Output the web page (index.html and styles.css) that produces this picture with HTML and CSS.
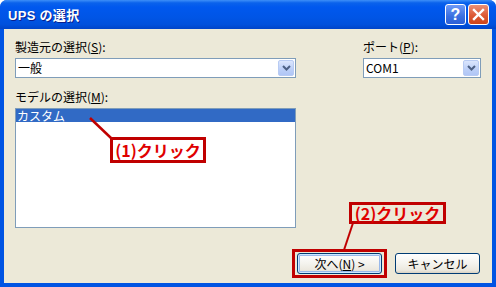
FILE: index.html
```html
<!DOCTYPE html>
<html lang="ja">
<head>
  <meta charset="UTF-8">
  <title>UPS の選択</title>
  <link rel="stylesheet" href="styles.css">
</head>
<body>
  <div class="window">
    <div class="titlebar">
      <span class="title">UPS の選択</span>
      <div class="caption-buttons">
        <div class="cap-btn help">?</div>
        <div class="cap-btn close">
          <svg viewBox="0 0 21 21" width="21" height="21">
            <path d="M6 6 L15 15 M15 6 L6 15" stroke="#fff" stroke-width="2.4" stroke-linecap="square"/>
          </svg>
        </div>
      </div>
    </div>

    <div class="client">
      <div class="top-row">
        <div class="field">
          <label class="label">製造元の選択(<u>S</u>):</label>
          <div class="combo">
            <span class="combo-text">一般</span>
            <span class="drop"><svg viewBox="0 0 9 6" width="9" height="6"><path d="M1 1 L4.5 4.5 L8 1" fill="none" stroke="#4d6185" stroke-width="2"/></svg></span>
          </div>
        </div>
        <div></div>
        <div class="field">
          <label class="label">ポート(<u>P</u>):</label>
          <div class="combo">
            <span class="combo-text">COM1</span>
            <span class="drop"><svg viewBox="0 0 9 6" width="9" height="6"><path d="M1 1 L4.5 4.5 L8 1" fill="none" stroke="#4d6185" stroke-width="2"/></svg></span>
          </div>
        </div>
      </div>

      <div class="field model">
        <label class="label">モデルの選択(<u>M</u>):</label>
        <div class="listbox">
          <div class="list-item selected">カスタム</div>
        </div>
      </div>

      <div class="buttons">
        <button class="btn default">次へ(<u>N</u>) &gt;</button>
        <button class="btn">キャンセル</button>
      </div>

      <!-- annotations drawn over the dialog -->
      <svg class="leaders" width="488" height="254">
        <line x1="86" y1="89" x2="107" y2="109" stroke="#c00000" stroke-width="2.5"/>
        <line x1="349" y1="194" x2="340" y2="221" stroke="#c00000" stroke-width="2"/>
      </svg>
      <div class="callout callout-1">(1)クリック</div>
      <div class="callout callout-2">(2)クリック</div>
      <div class="highlight"></div>
    </div>
  </div>
</body>
</html>
```

FILE: styles.css
```css
body {
  margin: 0;
  background: #fff;
  font-family: "Noto Sans CJK JP", "Liberation Sans", sans-serif;
  font-size: 12px;
  color: #000;
}
.window {
  width: 496px;
  height: 287px;
  display: flex;
  flex-direction: column;
  background: #0054e3;
  border-radius: 7px 7px 0 0;
  overflow: hidden;
}
.titlebar {
  height: 29px;
  flex: none;
  display: flex;
  align-items: center;
  justify-content: space-between;
  padding: 0 7px 0 8px;
  background: linear-gradient(to bottom, #3d8ff8 0%, #0a62ec 10%, #0058ee 25%, #0055e6 60%, #0050dc 85%, #0044c8 100%);
}
.title {
  color: #fff;
  font-family: "Liberation Sans", "Noto Sans CJK JP", sans-serif;
  font-weight: 700;
  font-size: 13px;
  text-shadow: 1px 1px 0 #0a1e8c;
  letter-spacing: 0.3px;
}
.caption-buttons {
  display: flex;
  gap: 2px;
}
.cap-btn {
  width: 21px;
  height: 21px;
  box-sizing: border-box;
  border: 1px solid #fff;
  border-radius: 3px;
  display: flex;
  align-items: center;
  justify-content: center;
  color: #fff;
  font-family: "Liberation Sans", sans-serif;
  font-weight: 700;
  font-size: 16px;
}
.cap-btn svg {
  margin: -1px;
}
.help {
  background: linear-gradient(to bottom, #6e9af7, #3a6fe0 60%, #2c5fd6);
}
.close {
  background: linear-gradient(to bottom, #ea9077, #dd5a36 55%, #cc4419);
}
.client {
  flex: 1;
  margin: 0 4px 4px;
  background: #ece9d8;
  position: relative;
  padding: 10px 12px 9px 11px;
  display: flex;
  flex-direction: column;
}
.top-row {
  display: grid;
  grid-template-columns: 281px 1fr 118px;
  margin-right: -1px;
}
.label {
  display: block;
  height: 15px;
  line-height: 15px;
  margin-bottom: 4px;
}
.combo {
  height: 20px;
  box-sizing: border-box;
  border: 1px solid #7f9db9;
  background: #fff;
  display: flex;
  align-items: center;
  justify-content: space-between;
  padding: 1px 1px 1px 2px;
}
.combo-text {
  line-height: 16px;
}
.drop {
  width: 16px;
  height: 16px;
  box-sizing: border-box;
  border: 1px solid #b8cbf3;
  border-radius: 2px;
  background: linear-gradient(to bottom, #dbe6fd, #bccff8 60%, #b0c6f6);
  display: flex;
  align-items: center;
  justify-content: center;
}
.model {
  margin-top: 11px;
}
.listbox {
  width: 281px;
  height: 120px;
  box-sizing: border-box;
  border: 1px solid #7f9db9;
  background: #fff;
}
.list-item {
  height: 13px;
  line-height: 13px;
  padding-left: 1px;
}
.list-item.selected {
  background: #316ac5;
  color: #fff;
}
.buttons {
  margin-top: auto;
  display: flex;
  justify-content: flex-end;
  gap: 13px;
}
.btn {
  width: 85px;
  height: 21px;
  box-sizing: border-box;
  border: 1px solid #003c74;
  border-radius: 3px;
  background: linear-gradient(to bottom, #fff 0%, #f4f3ee 50%, #ebe8de 85%, #d8d2c2 100%);
  font-family: inherit;
  font-size: 12px;
  padding: 0;
  color: #000;
}
.btn.default {
  box-shadow: inset 0 0 0 1px #cee7ff, inset 0 0 0 2px #98b8ea;
}
.leaders {
  position: absolute;
  left: 0;
  top: 0;
  pointer-events: none;
}
.callout {
  position: absolute;
  box-sizing: border-box;
  border: 3px solid #c00000;
  color: #e00000;
  font-weight: 700;
  font-size: 16px;
  display: flex;
  align-items: center;
  justify-content: center;
  white-space: nowrap;
}
.callout-1 {
  left: 106px;
  top: 108px;
  width: 96px;
  height: 26px;
  background: #fff;
}
.callout-2 {
  left: 345px;
  top: 173px;
  width: 97px;
  height: 22px;
}
.highlight {
  position: absolute;
  left: 288px;
  top: 220px;
  width: 95px;
  height: 29px;
  box-sizing: border-box;
  border: 3px solid #c00000;
}
```
